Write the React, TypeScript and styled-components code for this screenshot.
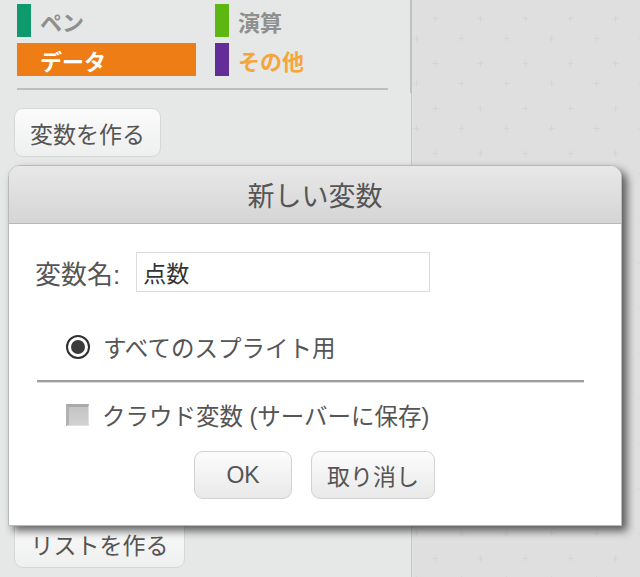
import React from "react";
import styled, { createGlobalStyle } from "styled-components";

const Global = createGlobalStyle`
  html, body { margin: 0; padding: 0; }
  body {
    width: 640px; height: 577px; overflow: hidden;
    font-family: "Liberation Sans", "Noto Sans CJK JP", sans-serif;
  }
`;

const Page = styled.div`
  position: relative;
  display: flex;
  width: 640px;
  height: 577px;
  overflow: hidden;
`;

const Palette = styled.div`
  position: relative;
  width: 412px;
  flex: none;
  background: #e6e7e7;
  border-right: 1px solid #c6c8c8;
  display: flex;
  flex-direction: column;
  padding: 4px 0 0 14px;
  box-sizing: border-box;
`;

const ScrollThumb = styled.div`
  position: absolute;
  right: -1px;
  top: 0;
  width: 2px;
  height: 93px;
  background: #bfc0c0;
`;

const Categories = styled.div`
  display: grid;
  grid-template-columns: 198px 180px;
  row-gap: 6px;
  padding-left: 3px;
`;

const Category = styled.div<{ $color: string; $selected?: boolean; $text?: string }>`
  display: flex;
  align-items: center;
  height: 33px;
  box-sizing: border-box;
  font-size: 22px;
  font-weight: bold;
  color: ${(p) => (p.$selected ? "#ffffff" : p.$text || "#8e8f8f")};
  ${(p) =>
    p.$selected
      ? `width: 179px; background: ${p.$color}; padding-left: 23px;`
      : `border-left: 14px solid ${p.$color}; padding-left: 9px;`}
`;

const Separator = styled.div`
  width: 371px;
  height: 2px;
  margin: 12px 0 0 3px;
  background: #bdbebe;
`;

const PaletteButton = styled.div<{ $width: number }>`
  width: ${(p) => p.$width}px;
  height: 49px;
  box-sizing: border-box;
  border: 1px solid #d6d8d8;
  border-radius: 9px;
  background: linear-gradient(#fbfbfb, #eeefef);
  display: flex;
  align-items: center;
  justify-content: center;
  font-size: 23px;
  color: #555;
`;

const TopButton = styled(PaletteButton)`
  margin-top: 18px;
`;

const BottomButton = styled(PaletteButton)`
  margin-top: auto;
  margin-bottom: 9px;
`;

const Canvas = styled.div`
  flex: 1;
  position: relative;
  background: #dfdfdf;
`;

const CanvasGrid = styled.svg`
  display: block;
  width: 100%;
  height: 100%;
`;

const Dialog = styled.div`
  position: absolute;
  left: 8px;
  top: 165px;
  width: 614px;
  height: 361px;
  box-sizing: border-box;
  border: 1px solid #b9b9b9;
  border-radius: 12px 12px 0 0;
  background: #ffffff;
  box-shadow: 5px 5px 8px rgba(0, 0, 0, 0.6);
  display: flex;
  flex-direction: column;
  overflow: hidden;
`;

const Header = styled.div`
  height: 58px;
  flex: none;
  box-sizing: border-box;
  border-bottom: 1px solid #b8b8b8;
  background: linear-gradient(#e8e8e8, #d5d5d5);
  display: flex;
  align-items: center;
  justify-content: center;
  font-size: 27px;
  color: #555;
`;

const Body = styled.div`
  flex: 1;
  display: flex;
  flex-direction: column;
  padding: 28px 37px 0 26px;
`;

const NameRow = styled.div`
  display: flex;
  align-items: center;
  gap: 16px;
`;

const Label = styled.span`
  font-size: 26px;
  color: #555;
`;

const NameInput = styled.div`
  width: 294px;
  height: 40px;
  box-sizing: border-box;
  border: 1px solid #dcdcdc;
  padding-left: 6px;
  display: flex;
  align-items: center;
  font-size: 23px;
  color: #333;
`;

const OptionRow = styled.div<{ $top: number }>`
  display: flex;
  align-items: center;
  gap: 13px;
  height: 30px;
  margin-top: ${(p) => p.$top}px;
  padding-left: 31px;
  font-size: 23.5px;
  color: #555;
`;

const Radio = styled.span`
  width: 24px;
  height: 24px;
  flex: none;
  box-sizing: border-box;
  border-radius: 50%;
  border: 2px solid #2f2f2f;
  background: #fff;
  display: flex;
  align-items: center;
  justify-content: center;
  &::after {
    content: "";
    width: 14px;
    height: 14px;
    border-radius: 50%;
    background: #3a3a3a;
  }
`;

const Checkbox = styled.span`
  width: 23px;
  height: 22px;
  flex: none;
  box-sizing: border-box;
  border: 1px solid #e0e0e0;
  border-top: 3px solid #a9a9a9;
  border-left: 3px solid #b2b2b2;
  background: linear-gradient(#c4c4c4, #d2d2d2);
`;

const Divider = styled.div`
  height: 2px;
  margin: 18px 0 0 2px;
  background: #9e9e9e;
  border-bottom: 1px solid #dcdcdc;
`;

const ButtonRow = styled.div`
  display: flex;
  justify-content: center;
  gap: 19px;
  margin-top: 21px;
  padding-left: 10px;
`;

const DialogButton = styled.div<{ $width: number }>`
  width: ${(p) => p.$width}px;
  height: 48px;
  box-sizing: border-box;
  border: 1px solid #d2d2d2;
  border-radius: 9px;
  background: linear-gradient(#fcfcfc, #e9e9e9);
  display: flex;
  align-items: center;
  justify-content: center;
  font-size: 23px;
  color: #555;
`;

export default function App() {
  return (
    <Page>
      <Global />
      <Palette>
        <ScrollThumb />
        <Categories>
          <Category $color="#0e9a6c">ペン</Category>
          <Category $color="#5cb712">演算</Category>
          <Category $color="#ee7d16" $selected>データ</Category>
          <Category $color="#632d99" $text="#f4a63b">その他</Category>
        </Categories>
        <Separator />
        <TopButton $width={147}>変数を作る</TopButton>
        <BottomButton $width={171}>リストを作る</BottomButton>
      </Palette>
      <Canvas>
        <CanvasGrid>
          <defs>
            <pattern id="plus" width="45" height="45" patternUnits="userSpaceOnUse">
              <g stroke="#d5d5d5" strokeWidth="1">
                <path d="M20.5 18.5h6M23.5 15.5v6" />
                <path d="M1.5 38.5h6M4.5 35.5v6" />
              </g>
            </pattern>
          </defs>
          <rect width="100%" height="100%" fill="url(#plus)" />
        </CanvasGrid>
      </Canvas>
      <Dialog>
        <Header>新しい変数</Header>
        <Body>
          <NameRow>
            <Label>変数名:</Label>
            <NameInput>点数</NameInput>
          </NameRow>
          <OptionRow $top={40}>
            <Radio />
            すべてのスプライト用
          </OptionRow>
          <Divider />
          <OptionRow $top={17}>
            <Checkbox />
            クラウド変数 (サーバーに保存)
          </OptionRow>
          <ButtonRow>
            <DialogButton $width={98}>OK</DialogButton>
            <DialogButton $width={124}>取り消し</DialogButton>
          </ButtonRow>
        </Body>
      </Dialog>
    </Page>
  );
}
